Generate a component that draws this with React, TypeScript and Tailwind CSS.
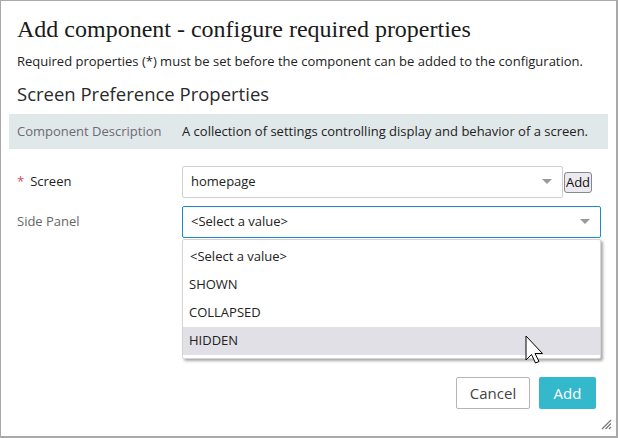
import React from "react";

const sans = { fontFamily: '"Open Sans", "Noto Sans", sans-serif' };

export default function App() {
  return (
    <div className="w-[618px] h-[438px] bg-white relative overflow-hidden" style={sans}>
      <div className="absolute inset-0 border border-[#a9a9a9] border-r-2 border-b-2 pointer-events-none" />
      <div className="flex flex-col pl-[17px] pr-[9px]">
        <h1
          className="text-[24px] leading-[30px] text-[#1a1a1a] mt-[14px]"
          style={{ fontFamily: '"Liberation Serif", serif' }}
        >
          Add component - configure required properties
        </h1>
        <p className="text-[13px] leading-[18px] text-[#222] mt-[8px]">
          Required properties (*) must be set before the component can be added to the configuration.
        </p>
        <h2 className="text-[18.5px] leading-[26px] text-[#2a2a2a] mt-[11px]">Screen Preference Properties</h2>
      </div>
      <div className="ml-[9px] mr-[10px] mt-[7px] h-[35px] bg-[#e1e8ea] flex items-center text-[13px]">
        <div className="w-[173px] pl-[8px] text-[#6b6b73]">Component Description</div>
        <div className="text-[#222]">A collection of settings controlling display and behavior of a screen.</div>
      </div>
      <div className="mt-[17px] flex items-center text-[13px] pl-[17px]">
        <div className="w-[165px] text-[#222]">
          <span className="text-[#e0455a] mr-[6px]">*</span>Screen
        </div>
        <div className="w-[381px] h-[32px] border border-[#cfcfcf] rounded-[2px] flex items-center pl-[8px] pr-[10px] justify-between text-[#222]">
          <span>homepage</span>
          <Caret />
        </div>
        <button className="ml-[1px] w-[28px] h-[21px] border border-[#888] rounded-[3px] bg-[#eceaf0] text-[13px] leading-[16px] text-[#111] flex items-center justify-center">
          Add
        </button>
      </div>
      <div className="mt-[8px] flex items-center text-[13px] pl-[17px]">
        <div className="w-[165px] text-[#666]">Side Panel</div>
        <div className="w-[419px] h-[32px] border border-[#1a8ccc] rounded-[2px] flex items-center pl-[8px] pr-[10px] justify-between text-[#222]">
          <span>&lt;Select a value&gt;</span>
          <Caret />
        </div>
      </div>
      <div className="absolute left-[182px] top-[239px] w-[419px] h-[120px] bg-white border border-[#d5d5d5] rounded-[2px] shadow-[2px_2px_3px_rgba(0,0,0,0.35)] flex flex-col pt-[3px] text-[13px] text-[#222]">
        <div className="h-[28px] flex items-center pl-[7px]">&lt;Select a value&gt;</div>
        <div className="h-[28px] flex items-center pl-[6px]">SHOWN</div>
        <div className="h-[28px] flex items-center pl-[6px]">COLLAPSED</div>
        <div className="h-[28px] flex items-center pl-[6px] bg-[#e1e0e6]">HIDDEN</div>
        <svg className="absolute left-[342px] top-[95px]" width="20" height="29" viewBox="0 0 20 29">
          <path d="M1 1 L1 25 L6.5 19.5 L10.5 28 L14 26.5 L10 18.5 L17.5 18.5 Z" fill="#fff" stroke="#000" strokeWidth="1" strokeLinejoin="miter" />
        </svg>
      </div>
      <div className="absolute left-[456px] top-[377px] flex gap-[9px] text-[15px]">
        <button className="w-[74px] h-[32px] border border-[#b5b5b5] rounded-[2px] bg-white text-[#444]">Cancel</button>
        <button className="w-[57px] h-[32px] rounded-[2px] bg-[#34b8cc] text-white">Add</button>
      </div>
      <svg className="absolute left-[600px] top-[418px]" width="12" height="12" viewBox="0 0 12 12">
        <path d="M11 2 L2 11 M11 5.5 L5.5 11 M11 9 L9 11" stroke="#777" strokeWidth="1.2" />
      </svg>
    </div>
  );
}

function Caret() {
  return (
    <svg width="10" height="6" viewBox="0 0 10 6">
      <path d="M0 0 L10 0 L5 5 Z" fill="#999" />
    </svg>
  );
}
